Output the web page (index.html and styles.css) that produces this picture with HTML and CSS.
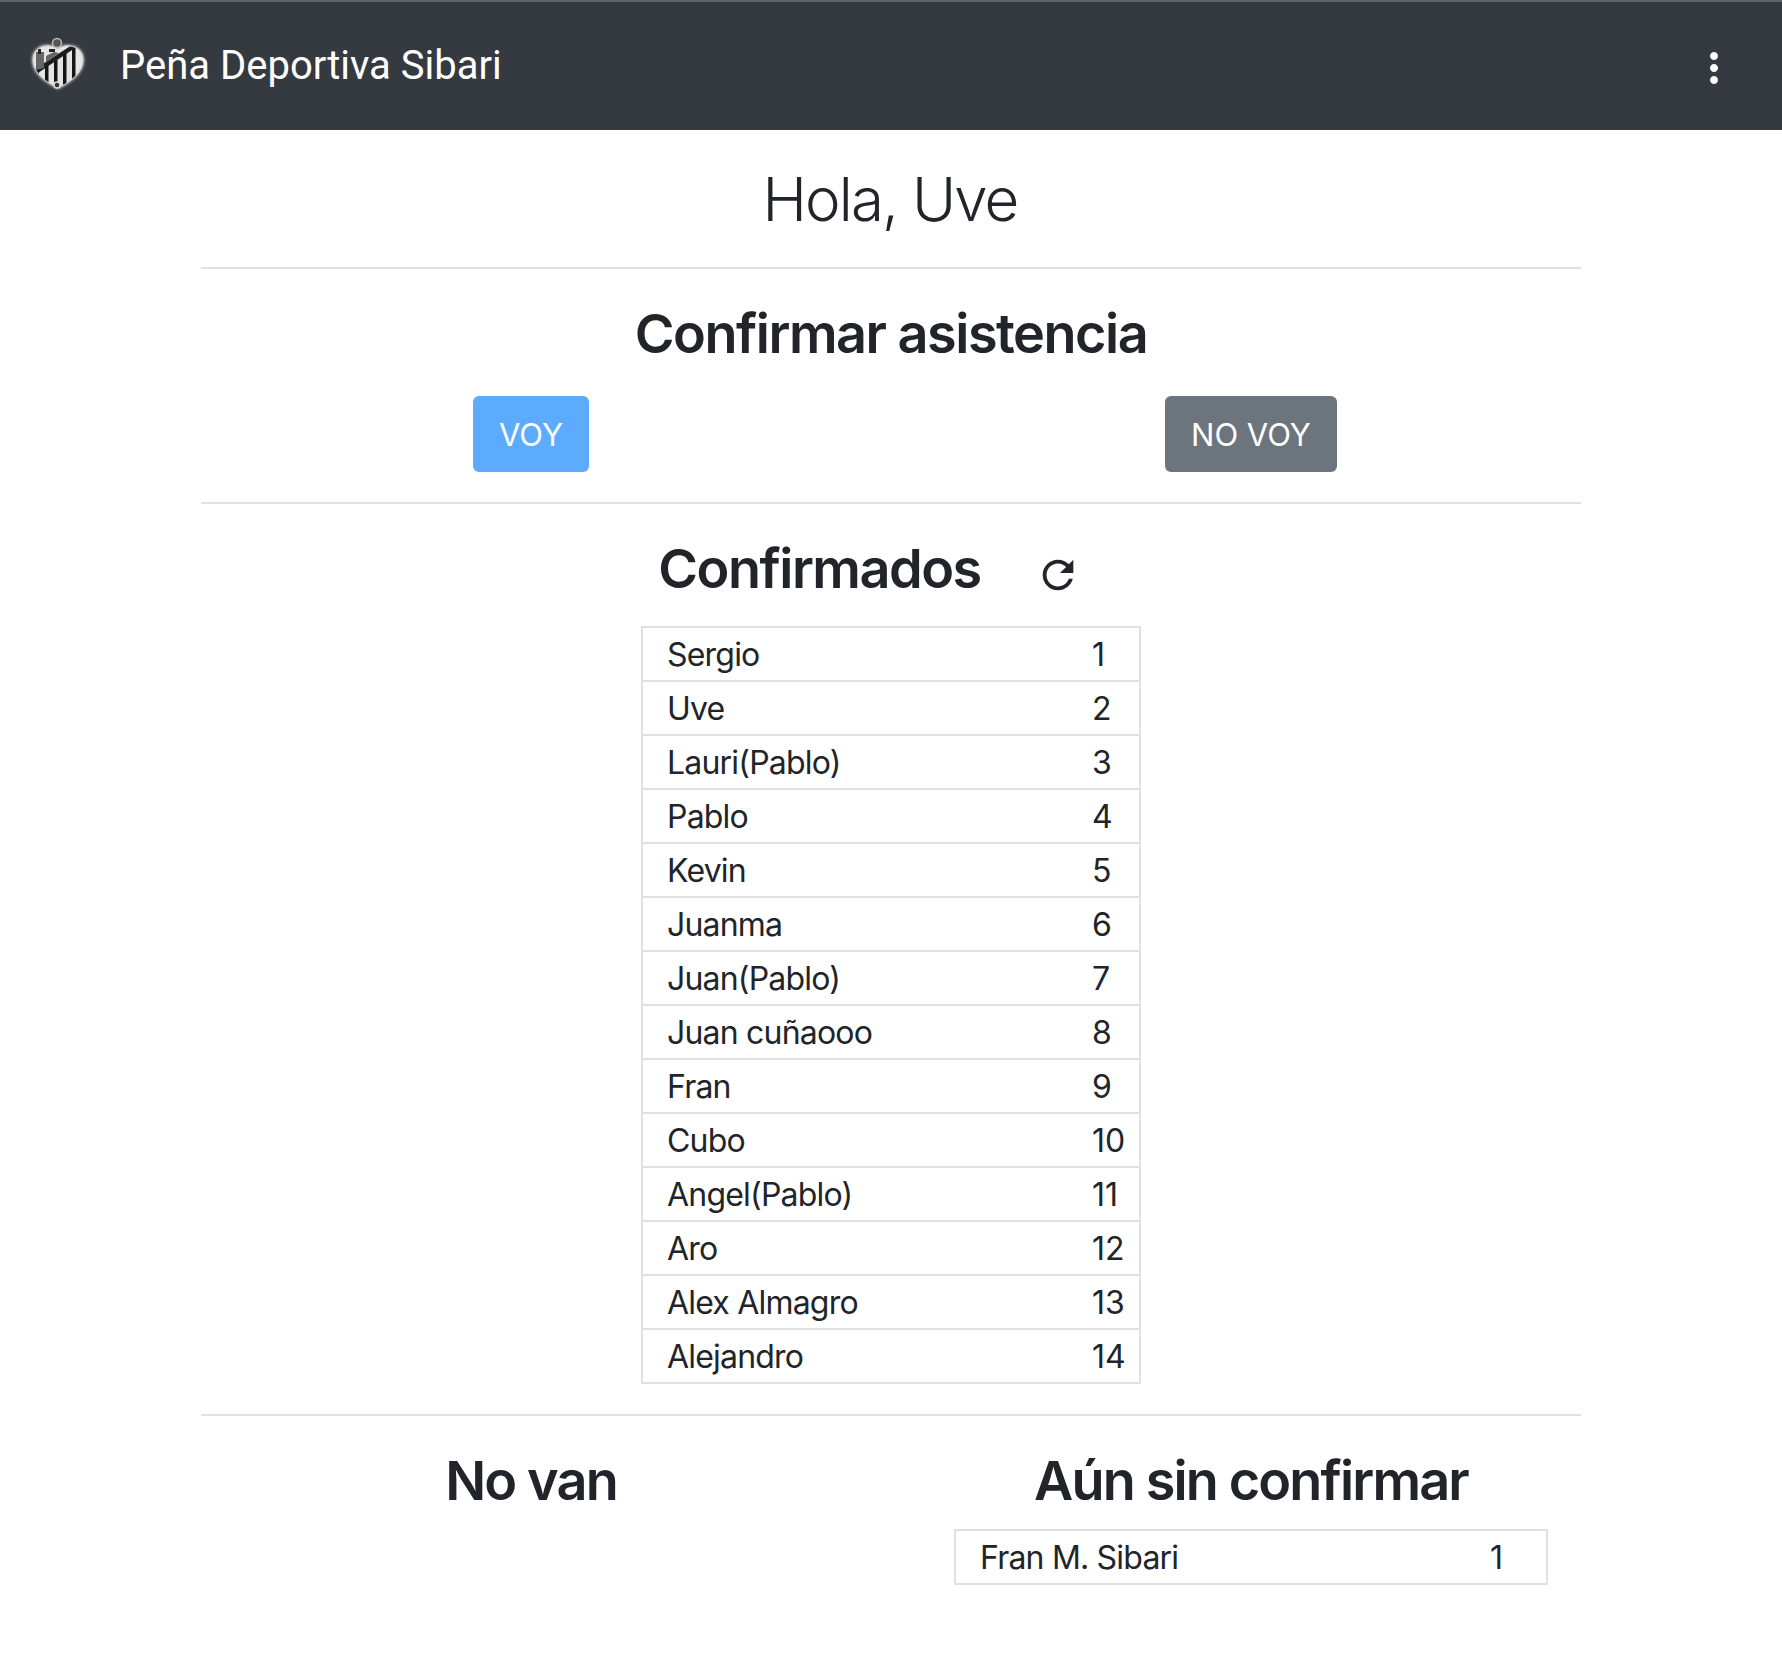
FILE: index.html
```html
<!DOCTYPE html>
<html lang="es">
<head>
  <meta charset="UTF-8">
  <meta name="viewport" content="width=device-width, initial-scale=1.0">
  <title>Peña Deportiva Sibari</title>
  <link rel="stylesheet" href="styles.css">
</head>
<body>
  <header class="navbar">
    <svg class="logo" viewBox="0 0 60 60" aria-hidden="true">
      <defs>
        <clipPath id="shield"><path d="M30 52C18 46 5 37 5 24 5 14 13 9 22 10c4 .5 6 2 8 3 3-2 7-4 12-3 8 1 13 6 13 14 0 13-13 22-25 28z"/></clipPath>
      </defs>
      <path class="logo-glow" d="M30 52C18 46 5 37 5 24 5 14 13 9 22 10c4 .5 6 2 8 3 3-2 7-4 12-3 8 1 13 6 13 14 0 13-13 22-25 28z"/>
      <g clip-path="url(#shield)">
        <rect x="0" y="0" width="60" height="60" fill="#e4e4e4"/>
        <path d="M8 34h3v20H8zM17 30h3.500v26H17zM26 24h3.500v32H26zM35 17h3.500v40H35zM44 11h3.500v42H44z" fill="#151515"/>
        <path d="M7 33 44 9l3 3-37 25z" fill="#1c1c1c"/>
        <path d="M8 16h8v16l-8 2zM18 20l8-4 5 1-9 7-4 2z" fill="#666"/>
        <path d="M10 13h3v5h-3zM21 13h6v3h-6z" fill="#222"/>
      </g>
      <path class="logo-line" d="M30 52C18 46 5 37 5 24 5 14 13 9 22 10c4 .5 6 2 8 3 3-2 7-4 12-3 8 1 13 6 13 14 0 13-13 22-25 28z"/>
      <circle class="logo-ball" cx="29" cy="7" r="4.500"/>
      <circle class="logo-ring" cx="29" cy="49" r="3"/>
    </svg>
    <span class="navbar-title">Peña Deportiva Sibari</span>
    <svg class="menu-icon" viewBox="0 0 24 24" aria-hidden="true">
      <path d="M12 8c1.100 0 2-.9 2-2s-.9-2-2-2-2 .9-2 2 .9 2 2 2zm0 2c-1.100 0-2 .9-2 2s.9 2 2 2 2-.9 2-2-.9-2-2-2zm0 6c-1.100 0-2 .9-2 2s.9 2 2 2 2-.9 2-2-.9-2-2-2z"/>
    </svg>
  </header>

  <main class="container">
    <h1 class="greeting">Hola, Uve</h1>
    <hr>

    <h2 class="confirm-title">Confirmar asistencia</h2>
    <div class="row">
      <div class="col-center"><button class="btn btn-voy">VOY</button></div>
      <div class="col-center"><button class="btn btn-novoy">NO VOY</button></div>
    </div>
    <hr>

    <div class="list-title">
      <h2>Confirmados</h2>
      <svg class="refresh-icon" viewBox="0 0 24 24" aria-hidden="true">
        <path d="M17.650 6.350C16.200 4.900 14.210 4 12 4c-4.420 0-7.990 3.580-7.990 8s3.570 8 7.990 8c3.730 0 6.840-2.550 7.730-6h-2.080c-.82 2.330-3.040 4-5.650 4-3.310 0-6-2.690-6-6s2.690-6 6-6c1.660 0 3.140.69 4.220 1.780L13 11h7V4l-2.350 2.350z"/>
      </svg>
    </div>
    <table class="players players-main">
      <tr><td>Sergio</td><td class="num">1</td></tr>
      <tr><td>Uve</td><td class="num">2</td></tr>
      <tr><td>Lauri(Pablo)</td><td class="num">3</td></tr>
      <tr><td>Pablo</td><td class="num">4</td></tr>
      <tr><td>Kevin</td><td class="num">5</td></tr>
      <tr><td>Juanma</td><td class="num">6</td></tr>
      <tr><td>Juan(Pablo)</td><td class="num">7</td></tr>
      <tr><td>Juan cuñaooo</td><td class="num">8</td></tr>
      <tr><td>Fran</td><td class="num">9</td></tr>
      <tr><td>Cubo</td><td class="num">10</td></tr>
      <tr><td>Angel(Pablo)</td><td class="num">11</td></tr>
      <tr><td>Aro</td><td class="num">12</td></tr>
      <tr><td>Alex Almagro</td><td class="num">13</td></tr>
      <tr><td>Alejandro</td><td class="num">14</td></tr>
    </table>
    <hr class="hr-bottom">

    <div class="row">
      <section>
        <h2 class="col-title">No van</h2>
      </section>
      <section>
        <h2 class="col-title">Aún sin confirmar</h2>
        <table class="players players-side">
          <tr><td>Fran M. Sibari</td><td class="num">1</td></tr>
        </table>
      </section>
    </div>
  </main>
</body>
</html>
```

FILE: styles.css
```css
* {
  box-sizing: border-box;
}

body {
  margin: 0;
  font-family: Inter, "Liberation Sans", sans-serif;
  color: #212529;
  background: #fff;
}

.navbar {
  display: flex;
  align-items: center;
  height: 130px;
  padding: 0 28px;
  background: #343a40;
  border-top: 2px solid #5f6366;
}

.logo {
  width: 60px;
  height: 60px;
  overflow: visible;
}

.logo-glow {
  fill: #ddd;
  stroke: #ccc;
  stroke-width: 2;
  filter: blur(1.5px);
}

.logo-line {
  fill: none;
  stroke: #ccc;
  stroke-width: 1;
}

.logo-ball {
  fill: #555;
  stroke: #bbb;
  stroke-width: 1.5;
}

.logo-ring {
  fill: #333;
  stroke: #ddd;
  stroke-width: 1.5;
}

.navbar-title {
  margin-left: 32px;
  margin-top: -2px;
  font-family: Roboto, sans-serif;
  font-size: 40px;
  color: #fff;
}

.menu-icon {
  width: 48px;
  height: 48px;
  margin-left: auto;
  margin-top: 4px;
  margin-right: 16px;
  fill: #fff;
}

.container {
  width: 1440px;
  margin: 0 auto;
  padding: 0 30px;
}

hr {
  height: 2px;
  margin: 0;
  border: 0;
  background: #dee2e6;
}

h1, h2 {
  margin: 0;
  text-align: center;
}

.greeting {
  font-size: 60px;
  font-weight: 300;
  letter-spacing: -1.900px;
  line-height: 68px;
  padding: 35px 2px 34px 0;
}

h2 {
  font-size: 54px;
  font-weight: 600;
  letter-spacing: -1.500px;
  line-height: 60px;
}

.confirm-title {
  padding-top: 35px;
}

.row {
  display: grid;
  grid-template-columns: 1fr 1fr;
  margin: 0 -30px;
}

.col-center {
  display: flex;
  justify-content: center;
  padding: 32px 0 30px;
}

.btn {
  height: 76px;
  padding: 0 26px;
  border: 0;
  border-radius: 6px;
  font-family: inherit;
  font-size: 31px;
  color: #fff;
}

.btn-voy {
  background: #5cabff;
}

.btn-novoy {
  background: #6c757d;
}

.list-title {
  display: flex;
  justify-content: center;
  align-items: center;
  gap: 54px;
  padding: 35px 43px 27px 0;
}

.refresh-icon {
  width: 46px;
  height: 46px;
  margin-top: 12px;
  fill: #212529;
}

.players {
  border-collapse: collapse;
  margin: 0 auto;
  font-size: 32px;
}

.players td {
  height: 54px;
  padding: 0 0 0 24px;
  letter-spacing: -0.800px;
  border-top: 2px solid #dee2e6;
  border-bottom: 2px solid #dee2e6;
}

.players td:first-child {
  border-left: 2px solid #dee2e6;
}

.players td.num {
  padding: 0;
  letter-spacing: 0;
  border-right: 2px solid #dee2e6;
}

.players-main {
  width: 500px;
}

.players-main .num {
  width: 48px;
}

.players-side {
  width: 594px;
  margin-top: 18px;
}

.players-side .num {
  width: 57px;
}

.hr-bottom {
  margin-top: 30px;
}

.col-title {
  padding-top: 35px;
  letter-spacing: -1.850px;
}
```
